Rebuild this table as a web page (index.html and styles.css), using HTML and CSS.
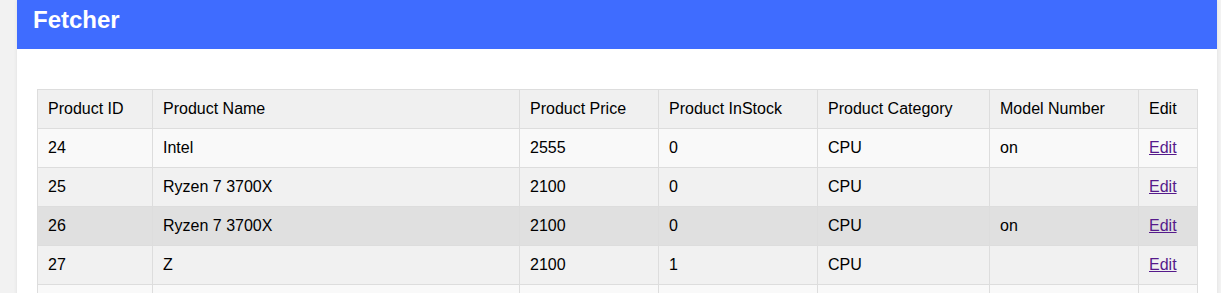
FILE: index.html
```html
<!DOCTYPE html>
<html>
<head>
<meta charset="utf-8">
<title>Fetcher</title>
<link rel="stylesheet" href="styles.css">
</head>
<body>
<div class="page">
  <header class="topbar"><h1 class="title">Fetcher</h1></header>
  <main class="content">
    <table class="products">
      <colgroup>
        <col class="c-id"><col class="c-name"><col class="c-price"><col class="c-stock"><col class="c-cat"><col class="c-model"><col class="c-edit">
      </colgroup>
      <thead>
        <tr><th>Product ID</th><th>Product Name</th><th>Product Price</th><th>Product InStock</th><th>Product Category</th><th>Model Number</th><th>Edit</th></tr>
      </thead>
      <tbody>
        <tr><td>24</td><td>Intel</td><td>2555</td><td>0</td><td>CPU</td><td>on</td><td><a class="edit" href="#">Edit</a></td></tr>
        <tr><td>25</td><td>Ryzen 7 3700X</td><td>2100</td><td>0</td><td>CPU</td><td></td><td><a class="edit" href="#">Edit</a></td></tr>
        <tr class="hover"><td>26</td><td>Ryzen 7 3700X</td><td>2100</td><td>0</td><td>CPU</td><td>on</td><td><a class="edit" href="#">Edit</a></td></tr>
        <tr><td>27</td><td>Z</td><td>2100</td><td>1</td><td>CPU</td><td></td><td><a class="edit" href="#">Edit</a></td></tr>
        <tr class="blank"><td></td><td></td><td></td><td></td><td></td><td></td><td></td></tr>
      </tbody>
    </table>
  </main>
</div>
</body>
</html>
```

FILE: styles.css
```css
html, body {
  margin: 0;
  padding: 0;
  background: #f2f2f2;
  font-family: "Liberation Sans", Arial, sans-serif;
  color: #000;
}
.page {
  width: 1200px;
  margin-left: 17px;
  background: #fff;
  min-height: 400px;
  box-shadow: 0 0 4px rgba(0,0,0,0.08);
}
.topbar {
  background: #3f6cff;
  height: 49px;
  box-sizing: border-box;
  padding: 8px 16px 0;
}
.title {
  margin: 0;
  font-size: 24px;
  line-height: 24px;
  font-weight: bold;
  color: #fff;
}
.content {
  padding: 40px 20px 20px;
}
.products {
  width: 1160px;
  table-layout: fixed;
  border-collapse: collapse;
  font-size: 16px;
}
.c-id { width: 115px; }
.c-name { width: 367px; }
.c-price { width: 139px; }
.c-stock { width: 159px; }
.c-cat { width: 172px; }
.c-model { width: 149px; }
.c-edit { width: 59px; }
.products th,
.products td {
  border: 1px solid #ddd;
  padding: 10px;
  text-align: left;
  font-weight: normal;
  line-height: 18px;
  white-space: nowrap;
}
.products tr.blank td { height: 18px; }
.products thead tr { background: #f0f0f0; }
.products tbody tr:nth-child(odd) { background: #f9f9f9; }
.products tbody tr:nth-child(even) { background: #f1f1f1; }
.products tbody tr.hover { background: #e0e0e0; }
.edit { color: #551a8b; text-decoration: underline; }
```
